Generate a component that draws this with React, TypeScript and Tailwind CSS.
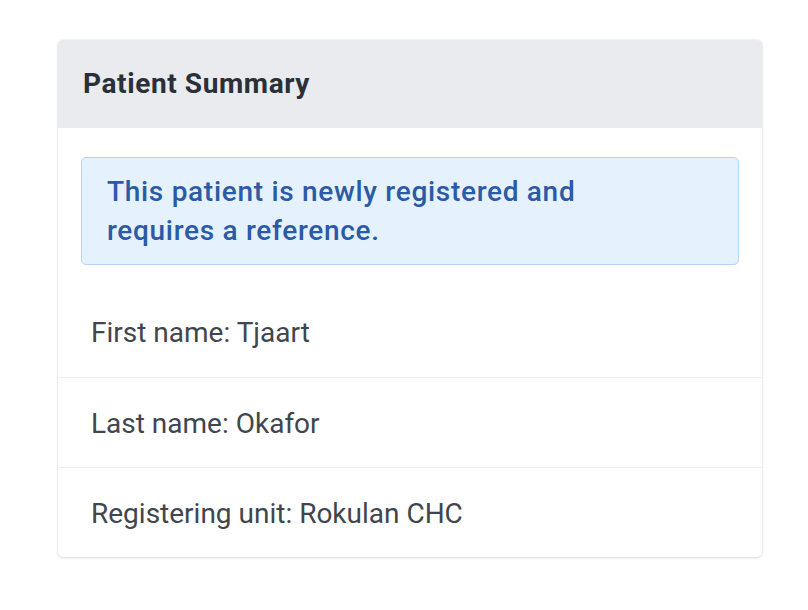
import React from "react"

// ── Data ──────────────────────────────────────────────────────────────────

const FIELDS = [
  { label: "First name", value: "Tjaart" },
  { label: "Last name", value: "Okafor" },
  { label: "Registering unit", value: "Rokulan CHC" },
]

// ── Card ──────────────────────────────────────────────────────────────────

export default function App() {
  return (
    <div className="min-h-[610px] w-full bg-white pl-[58px] pt-[40px]" style={{ fontFamily: "Roboto, 'Liberation Sans', sans-serif" }}>
      <div className="w-[704px] overflow-hidden rounded-[5px] bg-white shadow-[0_1px_3px_rgba(0,0,0,0.12),0_0_0_1px_rgba(0,0,0,0.03)]">
        {/* Header */}
        <div className="flex h-[88px] items-center bg-[#e9ebef] pl-[25px]">
          <h2 className="text-[28px] font-bold tracking-[0.6px] text-[#2a2f38]">Patient Summary</h2>
        </div>

        {/* Notice */}
        <div className="px-[23px] pb-[22px] pt-[29px]">
          <div className="rounded-[5px] border-[1.5px] border-[#b6d5f4] bg-[#e5f1fc] px-[25px] py-[14px]">
            <p className="text-[28px] font-medium leading-[39px] tracking-[0.7px] text-[#2b5aa6]">
              This patient is newly registered and
              <br />
              requires a reference.
            </p>
          </div>
        </div>

        {/* Fields */}
        <div>
          {FIELDS.map((f, i) => (
            <div
              key={f.label}
              className={[
                "flex h-[90px] items-center pl-[33px] pt-[2px] text-[28px] text-[#41464e]",
                i > 0 ? "border-t border-[#eceef1]" : "",
              ].join(" ")}
            >
              {f.label}: {f.value}
            </div>
          ))}
        </div>
      </div>
    </div>
  )
}
